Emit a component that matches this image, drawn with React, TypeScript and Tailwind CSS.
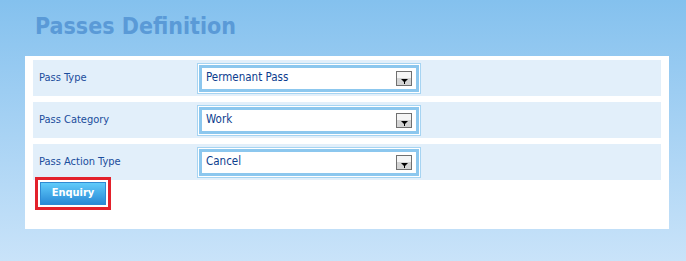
import React from "react";

const rows = [
  { label: "Pass Type", value: "Permenant Pass" },
  { label: "Pass Category", value: "Work" },
  { label: "Pass Action Type", value: "Cancel" },
];

const DropArrow: React.FC = () => (
  <div className="flex h-[15px] w-[16px] flex-col border border-[#707070] bg-[#f2f2f2]">
    <div className="h-[6px] bg-[#f5f5f5]" />
    <div className="flex flex-1 items-start justify-center bg-[#d4d4d4]">
      <svg width="7" height="5" viewBox="0 0 7 5" className="mt-px">
        <path d="M0 0h7L3.5 3.5z" fill="#000" />
        <rect x="3" y="3" width="1" height="2" fill="#000" />
      </svg>
    </div>
  </div>
);

const SelectBox: React.FC<{ value: string }> = ({ value }) => (
  <div className="w-[224px] border border-[#a6d4f2] bg-white p-px">
    <div className="flex h-[27px] items-center justify-between border-[3px] border-[#8cc7ee] bg-white pl-[4px] pr-[4px]">
      <span className="text-[11.5px] text-[#0c3d8e]">{value}</span>
      <DropArrow />
    </div>
  </div>
);

const App: React.FC = () => {
  return (
    <div
      className="h-[261px] w-full overflow-hidden bg-gradient-to-b from-[#84c1ee] to-[#c9e3f9]"
      style={{ fontFamily: '"DejaVu Sans Condensed", "DejaVu Sans", sans-serif' }}
    >
      <h1 className="h-[56px] pl-[35px] pt-[12px] text-[23px] font-bold leading-[28px] text-[#5a9ad7]">
        Passes Definition
      </h1>
      <div className="ml-[25px] h-[173px] w-[644px] bg-white px-[8px] pt-[4px]">
        <div className="flex flex-col gap-[6px]">
          {rows.map((r) => (
            <div key={r.label} className="flex h-[36px] items-center bg-[#e2effa]">
              <div className="w-[164px] pl-[6px] text-[11px] text-[#1a4d9c]">{r.label}</div>
              <SelectBox value={r.value} />
            </div>
          ))}
        </div>
        <div className="relative -mt-[3px] ml-[2px] w-fit border-[3px] border-[#e3212b] bg-white p-[2px]">
          <button className="flex h-[23px] w-[66px] items-center justify-center border border-[#2f8ad3] bg-gradient-to-b from-[#5fcbfa] to-[#2a8ad6] text-[11px] font-bold text-white">
            Enquiry
          </button>
        </div>
      </div>
    </div>
  );
};

export default App;
